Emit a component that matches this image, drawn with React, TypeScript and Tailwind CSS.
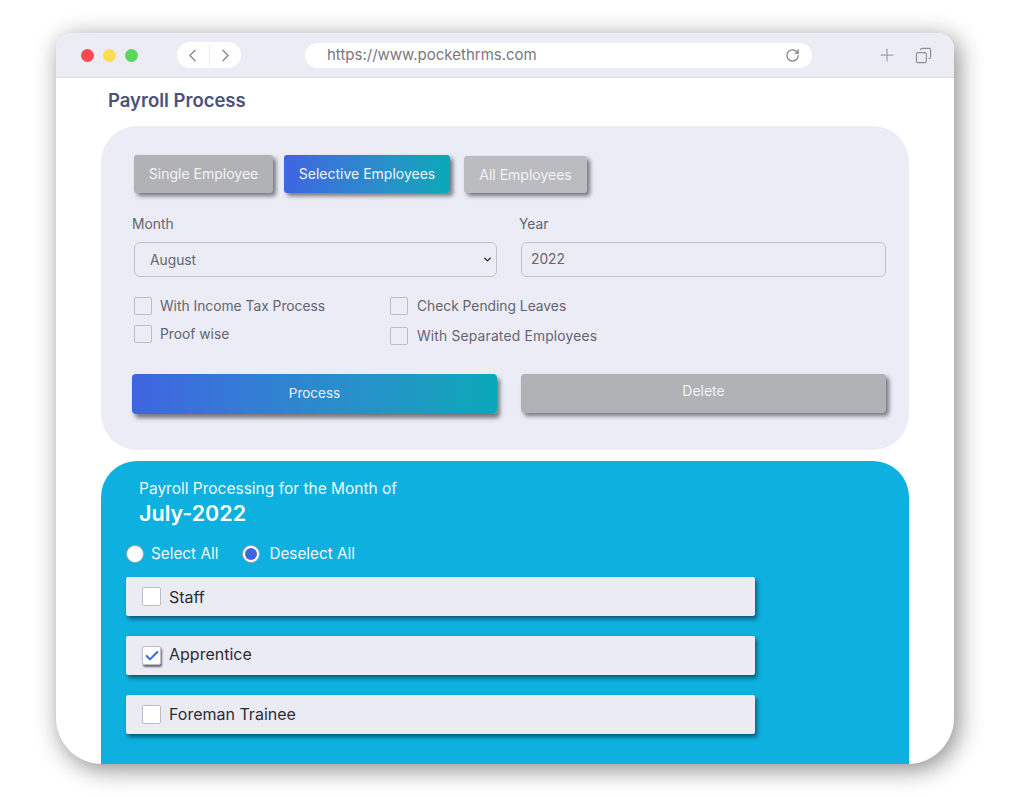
import { ChevronLeft, ChevronRight, Check, RotateCw, Plus, Copy, ChevronDown } from "lucide-react";

const font = "font-['Inter','Liberation_Sans',sans-serif]";
const gradient = "bg-gradient-to-r from-[#3f64e0] to-[#07a8b8]";

// Small square checkbox, used both in the form and in the category rows
function Box({ checked, size = "h-[18px] w-[18px]" }: { checked?: boolean; size?: string }) {
  return (
    <span
      className={`flex shrink-0 items-center justify-center rounded-[2px] border border-[#bcbdc6] ${size} ${
        checked ? "bg-white shadow-[1px_2px_2px_rgba(0,0,0,0.55)]" : ""
      }`}
    >
      {checked && <Check className="h-4 w-4 text-[#3f64e0]" strokeWidth={3} />}
    </span>
  );
}

function TabButton({ label, className }: { label: string; className: string }) {
  return (
    <div
      className={`flex items-center justify-center rounded-[3px] text-[14px] text-[#f2f3f7] shadow-[3px_3px_4px_rgba(40,40,50,0.6)] ${className}`}
    >
      {label}
    </div>
  );
}

function CheckField({ label, className = "gap-[8px]", labelClassName = "" }: { label: string; className?: string; labelClassName?: string }) {
  return (
    <div className={`flex h-[18px] items-center text-[13.8px] text-[#63646f] ${className}`}>
      <Box />
      <span className={labelClassName}>{label}</span>
    </div>
  );
}

function CategoryRow({
  label,
  checked,
  className = "",
  labelClassName = "",
}: {
  label: string;
  checked?: boolean;
  className?: string;
  labelClassName?: string;
}) {
  return (
    <div
      className={`flex h-[39px] w-[629px] items-center gap-[8px] rounded-[2px] bg-[#ebebf4] pl-[16px] text-[16px] text-[#2c2d36] shadow-[2px_3px_4px_rgba(5,60,85,0.75)] ${className}`}
    >
      <Box checked={checked} size="h-[19px] w-[19px] bg-white" />
      <span className={labelClassName}>{label}</span>
    </div>
  );
}

export default function App() {
  return (
    <div className={`h-[797px] w-[1024px] overflow-hidden bg-white pl-[56px] pt-[33px] ${font}`}>
      <div className="flex h-[731px] w-[898px] flex-col overflow-hidden rounded-t-[16px] rounded-b-[46px] bg-white shadow-[4px_5px_24px_rgba(0,0,0,0.47)]">
        {/* Browser toolbar */}
        <div className="flex h-[45px] shrink-0 items-center border-b border-[#d9dae2] bg-[#ebecf4]">
          <div className="ml-[25px] flex gap-[9px]">
            <span className="h-[13px] w-[13px] rounded-full bg-[#fb4a4f]" />
            <span className="h-[13px] w-[13px] rounded-full bg-[#fddc55]" />
            <span className="h-[13px] w-[13px] rounded-full bg-[#5cd65c]" />
          </div>
          <div className="ml-[39px] flex h-[26px] w-[64px] items-center rounded-full bg-white text-[#85868d]">
            <span className="flex flex-1 justify-center border-r border-[#ebecf4]">
              <ChevronLeft className="h-[21px] w-[21px]" strokeWidth={1.5} />
            </span>
            <span className="flex flex-1 justify-center">
              <ChevronRight className="h-[21px] w-[21px]" strokeWidth={1.5} />
            </span>
          </div>
          <div className="ml-[64px] flex h-[25px] w-[507px] items-center justify-between rounded-full bg-white pl-[22px] pr-[12px] text-[15px] text-[#77787f]">
            <span>https://www.pockethrms.com</span>
            <RotateCw className="h-[15px] w-[15px] text-[#808187]" strokeWidth={2} />
          </div>
          <Plus className="ml-[65px] h-[20px] w-[20px] text-[#a0a1a8]" strokeWidth={1.5} />
          <Copy className="ml-[18px] h-[17px] w-[17px] -scale-x-100 text-[#8e8f96]" strokeWidth={1.6} />
        </div>

        {/* Page content */}
        <div className="flex min-h-0 flex-1 flex-col pl-[45px]">
          <h1 className="ml-[7px] mt-[11px] h-[24px] text-[18.5px] leading-[23px] font-semibold text-[#4b5279]">
            Payroll Process
          </h1>

          <section className="mt-[13px] h-[324px] w-[808px] shrink-0 rounded-[36px] bg-[#ebecf6] pl-[31px] pt-[29px]">
            <div className="flex h-[38px] items-start">
              <TabButton label="Single Employee" className="ml-[2px] h-[38px] w-[139px] bg-[#b1b2b6] pb-[2px]" />
              <TabButton label="Selective Employees" className={`ml-[11px] h-[38px] w-[166px] pb-[2px] ${gradient}`} />
              <TabButton label="All Employees" className="ml-[14px] mt-[1px] h-[37px] w-[123px] bg-[#bbbcc0]" />
            </div>

            <div className="mt-[22px] flex text-[13.8px] text-[#63646f]">
              <div className="w-[387px]">
                <div className="leading-[18px]">Month</div>
                <div className="ml-[2px] mt-[9px] flex h-[35px] w-[363px] items-center justify-between rounded-[6px] border border-[#c1c2cc] pl-[15px] pr-[3px]">
                  <span className="pt-[2px]">August</span>
                  <ChevronDown className="h-[11px] w-[11px] text-[#24242c]" strokeWidth={3} />
                </div>
              </div>
              <div>
                <div className="leading-[18px]">Year</div>
                <div className="ml-[2px] mt-[9px] flex h-[35px] w-[365px] items-center rounded-[6px] border border-[#c1c2cc] pl-[9px]">
                  2022
                </div>
              </div>
            </div>

            <div className="mt-[20px] flex">
              <div className="ml-[2px] flex w-[256px] flex-col gap-[10px]">
                <CheckField label="With Income Tax Process" />
                <CheckField label="Proof wise" />
              </div>
              <div className="flex flex-col gap-[12px]">
                <CheckField label="Check Pending Leaves" className="gap-[9px]" />
                <CheckField label="With Separated Employees" className="gap-[9px]" labelClassName="tracking-[0.2px]" />
              </div>
            </div>

            <div className="mt-[29px] flex">
              <div
                className={`flex h-[40px] w-[365px] items-center justify-center rounded-[4px] pb-[1px] text-[13.5px] text-[#eef0f8] shadow-[3px_4px_4px_rgba(40,40,50,0.6)] ${gradient}`}
              >
                Process
              </div>
              <div className="ml-[24px] flex h-[39px] w-[365px] items-center justify-center rounded-[4px] bg-[#b1b2b6] pb-[6px] text-[14px] text-[#f2f3f7] shadow-[3px_3px_4px_rgba(40,40,50,0.6)]">
                Delete
              </div>
            </div>
          </section>

          <section className="mt-[11px] min-h-0 w-[808px] flex-1 rounded-t-[36px] bg-[#0eb0e0] pl-[25px] pt-[18px]">
            <div className="ml-[13px] text-[15.5px] leading-[20px] text-[#eef8fc]">Payroll Processing for the Month of</div>
            <div className="ml-[13px] mt-[1px] text-[21.5px] leading-[26px] font-semibold text-white">July-2022</div>

            <div className="mt-[18px] flex h-[20px] items-center text-[15.3px] text-[#eef8fc]">
              <span className="h-[18px] w-[18px] rounded-full border border-[#9aa0a8] bg-white" />
              <span className="ml-[7px]">Select All</span>
              <span className="ml-[24px] flex h-[18px] w-[18px] items-center justify-center rounded-full border border-[#9aa0a8] bg-white">
                <span className="h-[12px] w-[12px] rounded-full bg-[#3f64e0]" />
              </span>
              <span className="ml-[9px]">Deselect All</span>
            </div>

            <CategoryRow label="Staff" labelClassName="pt-[1px]" className="mt-[13px]" />
            <CategoryRow label="Apprentice" labelClassName="pb-[3px]" checked className="mt-[20px]" />
            <CategoryRow label="Foreman Trainee" labelClassName="pb-[1px]" className="mt-[20px]" />
          </section>
        </div>
      </div>
    </div>
  );
}
